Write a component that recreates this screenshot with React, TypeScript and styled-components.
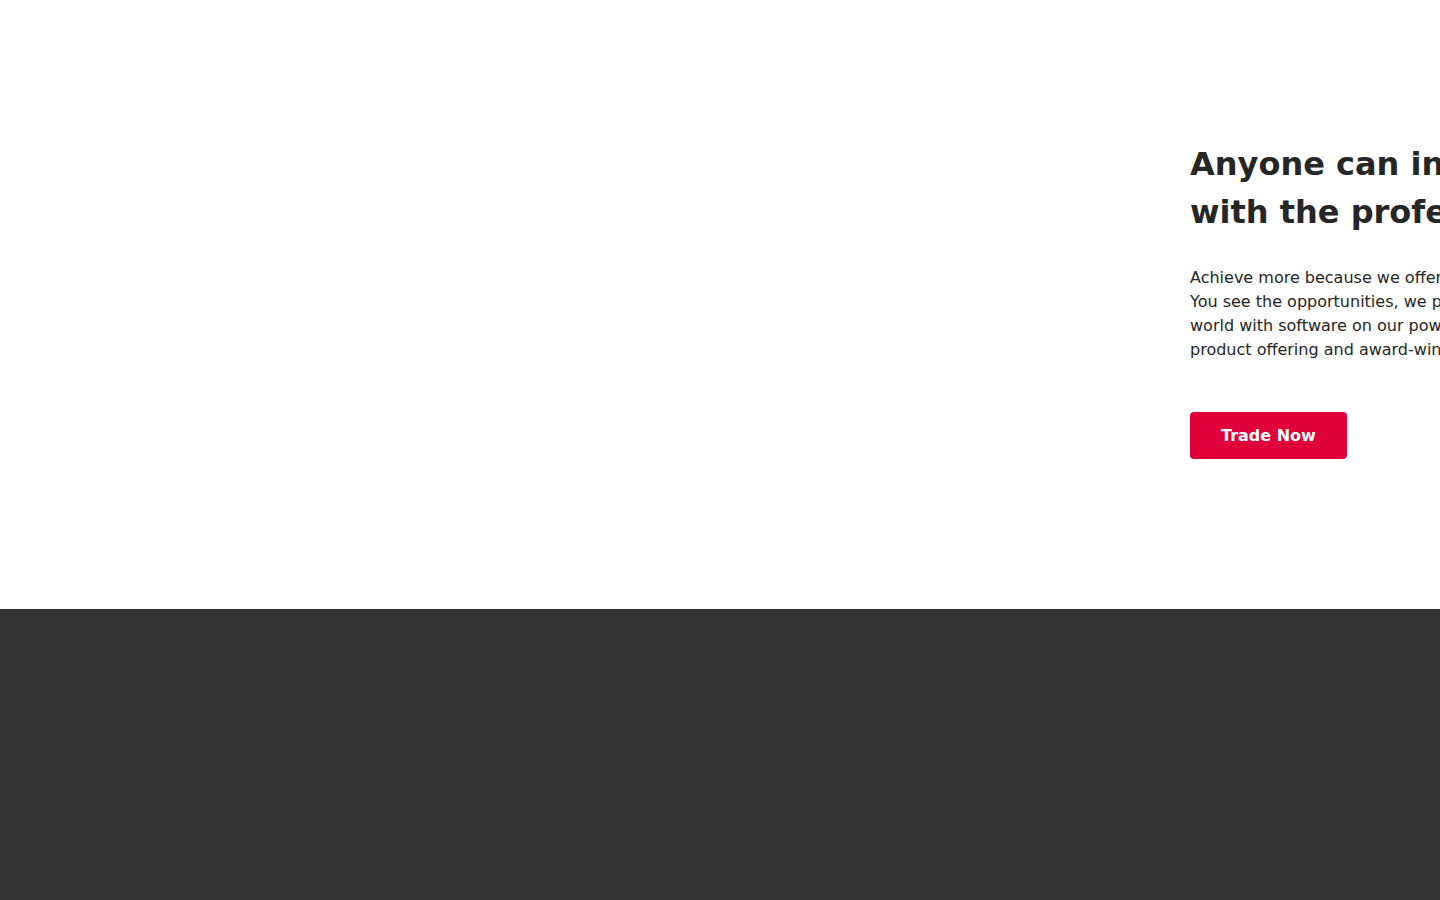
import React from "react";
import styled, { createGlobalStyle } from "styled-components";

const Global = createGlobalStyle`
  html, body { margin: 0; padding: 0; }
  body {
    font-family: "DejaVu Sans", "Liberation Sans", sans-serif;
    color: #222;
    background: #fff;
    overflow-x: hidden;
  }
`;

const Page = styled.div`
  width: 100%;
  overflow: hidden;
`;

const Hero = styled.section`
  display: grid;
  grid-template-columns: 1190px 640px;
  height: 609px;
  box-sizing: border-box;
  padding-top: 140px;
  background: #fff;
  overflow: hidden;
`;

const Visual = styled.div``;

const Content = styled.div`
  display: flex;
  flex-direction: column;
  align-items: flex-start;
`;

const Heading = styled.h1`
  margin: 0;
  font-size: 32px;
  line-height: 48px;
  font-weight: 700;
  color: #262626;
  white-space: nowrap;
`;

const Lead = styled.p`
  margin: 30px 0 0;
  font-size: 16px;
  line-height: 24px;
  color: #262626;
  white-space: nowrap;
`;

const Cta = styled.button`
  margin-top: 50px;
  height: 47px;
  padding: 0 31px;
  border: 0;
  border-radius: 4px;
  background: #e0003a;
  color: #fff;
  font-family: "DejaVu Sans", "Liberation Sans", sans-serif;
  font-size: 16px;
  font-weight: 700;
  cursor: pointer;
`;

const Footer = styled.footer`
  background: #333;
  min-height: 291px;
`;

export default function App() {
  return (
    <Page>
      <Global />
      <Hero>
        <Visual />
        <Content>
          <Heading>
            Anyone can invest like a pro
            <br />
            with the professionals
          </Heading>
          <Lead>
            Achieve more because we offer you more.
            <br />
            You see the opportunities, we provide access to the
            <br />
            world with software on our powerful platforms, a broad
            <br />
            product offering and award-winning service.
          </Lead>
          <Cta>Trade Now</Cta>
        </Content>
      </Hero>
      <Footer />
    </Page>
  );
}
